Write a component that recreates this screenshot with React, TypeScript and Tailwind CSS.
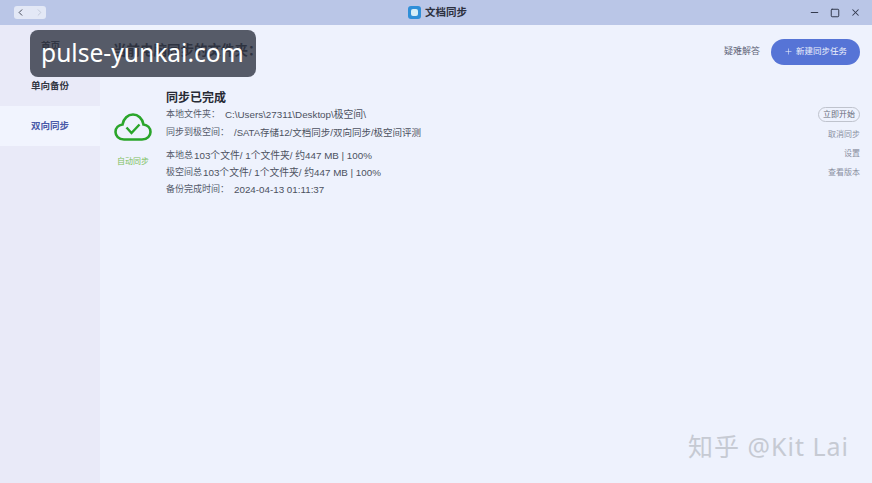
import { Minus, Plus, Square, X, ChevronLeft, ChevronRight } from 'lucide-react';

const FONT = "font-['Liberation_Sans','Noto_Sans_CJK_SC',sans-serif]";

function CloudCheck() {
  return (
    <svg width="38" height="28" viewBox="0 0 38 28" fill="none" stroke="#2aa52a" strokeWidth="2.6">
      <path d="M10 26.5 C4.5 26.5 1.5 22.5 1.5 19 C1.5 15 4.5 12 8.5 11.5 C9.5 5.5 14 1.5 19 1.5 C24 1.5 28.5 5.5 29.5 11.5 C33.5 12 36.5 15 36.5 19 C36.5 22.5 33.5 26.5 28 26.5 Z" />
      <path d="M12.5 14.5 L17.5 20 L25.5 11.5" strokeWidth="2.4" />
    </svg>
  );
}

function InfoRow({
  label,
  value,
  className,
  valueClass,
}: {
  label: string;
  value: string;
  className?: string;
  valueClass?: string;
}) {
  return (
    <div className={`flex text-[9px] leading-[13px] ${className ?? ''}`}>
      <span className="text-[#555b6b]">{label}</span>
      <span className={`${valueClass ?? 'text-[9.8px]'} text-[#4c5160]`}>{value}</span>
    </div>
  );
}

function SideItem({ label, active, className }: { label: string; active?: boolean; className?: string }) {
  return (
    <div
      className={`flex h-[40px] items-center text-[9.5px] font-bold ${className ?? 'pl-[31px]'} ${
        active ? 'bg-[#f1f4fe] text-[#4a5aa8]' : 'text-[#333743]'
      }`}
    >
      {label}
    </div>
  );
}

export default function App() {
  return (
    <div className={`relative flex h-[483px] w-[872px] flex-col overflow-hidden bg-[#eef2fd] ${FONT}`}>
      {/* 标题栏 */}
      <div className="flex h-[25px] shrink-0 items-center justify-between bg-[#bac6e7] pl-[14px] pr-[11px]">
        <div className="flex h-[13px] w-[32px] items-center justify-between rounded-[3px] bg-[#e3e8f6] px-[1px]">
          <ChevronLeft size={11} strokeWidth={2} className="text-[#3c4250]" />
          <ChevronRight size={11} strokeWidth={2} className="text-[#c0c7d8]" />
        </div>
        <div className="flex items-center gap-[4px] pl-[20px]">
          <div className="flex h-[13px] w-[13px] items-center justify-center rounded-[3px] bg-[#2f8fd8]">
            <div className="h-[7px] w-[7px] rounded-[2px] bg-[#d6eef7]" />
          </div>
          <span className="text-[10.5px] font-bold text-[#2c3040]">文档同步</span>
        </div>
        <div className="flex items-center gap-[10px] text-[#333a4e]">
          <Minus size={11} strokeWidth={2.6} />
          <Square size={10} strokeWidth={2.4} />
          <X size={11} strokeWidth={2.2} />
        </div>
      </div>

      <div className="flex min-h-0 flex-1">
        {/* 侧边栏 */}
        <div className="flex w-[100px] shrink-0 flex-col bg-[#e9eaf8] pt-px">
          <SideItem label="首页" className="pl-[41px]" />
          <SideItem label="单向备份" />
          <SideItem label="双向同步" active />
        </div>

        {/* 主内容 */}
        <div className="flex min-w-0 flex-1 flex-col pl-[13px] pr-[12px]">
          <div className="flex h-[53px] shrink-0 items-center justify-between">
            <h1 className="text-[13.5px] font-bold text-[#2c2f3a]">当前电脑同步的文件夹：</h1>
            <div className="flex items-center gap-[11px]">
              <span className="text-[9px] text-[#5f6478]">疑难解答</span>
              <button
                type="button"
                className="flex h-[26px] w-[89px] items-center justify-center gap-[3px] rounded-full bg-[#5674d6] text-[8.5px] text-[#eef1fb]"
              >
                <Plus size={9} strokeWidth={1.5} />
                新建同步任务
              </button>
            </div>
          </div>

          <div className="flex pt-[12px]">
            <div className="flex w-[40px] shrink-0 flex-col items-center pt-[23px]">
              <CloudCheck />
              <span className="mt-[16px] text-[8px] leading-[10px] text-[#7cbf5c]">自动同步</span>
            </div>
            <div className="flex min-w-0 flex-1 flex-col pl-[13px]">
              <div className="text-[12px] font-bold leading-[17px] text-[#272a34]">同步已完成</div>
              <InfoRow label="本地文件夹：" value="C:\Users\27311\Desktop\极空间\" className="gap-[5px] pt-[1px]" />
              <InfoRow
                label="同步到极空间："
                value="/SATA存储12/文档同步/双向同步/极空间评测"
                className="gap-[5px] pt-[5px]"
                valueClass="text-[9.5px]"
              />
              <InfoRow label="本地总" value="103个文件/ 1个文件夹/ 约447 MB | 100%" className="gap-[1px] pt-[10px]" />
              <InfoRow label="极空间总" value="103个文件/ 1个文件夹/ 约447 MB | 100%" className="gap-[1px] pt-[4px]" />
              <InfoRow label="备份完成时间：" value="2024-04-13 01:11:37" className="gap-[5px] pt-[4px]" />
            </div>
            <div className="flex shrink-0 flex-col items-end gap-[6px] pt-[17px] text-[8px] leading-[13px] text-[#8a8f9f]">
              <span className="rounded-full border border-[#bfc3cd] px-[4px] text-[#666b7b]">立即开始</span>
              <span>取消同步</span>
              <span>设置</span>
              <span>查看版本</span>
            </div>
          </div>
        </div>
      </div>

      {/* 知乎水印 */}
      <div className="absolute left-[688px] top-[431px] font-['Noto_Sans','Noto_Sans_CJK_SC',sans-serif] text-[25px] leading-[30px] tracking-[1px] text-[#c6cad3]">
        知乎 @Kit Lai
      </div>

      {/* 水印 */}
      <div className="absolute left-[30px] top-[30px] flex h-[47px] w-[226px] items-center rounded-[8px] bg-[#2f3542]/80 pl-[11px] font-['Noto_Sans',sans-serif] text-[24.6px] text-white">
        pulse-yunkai.com
      </div>
    </div>
  );
}
